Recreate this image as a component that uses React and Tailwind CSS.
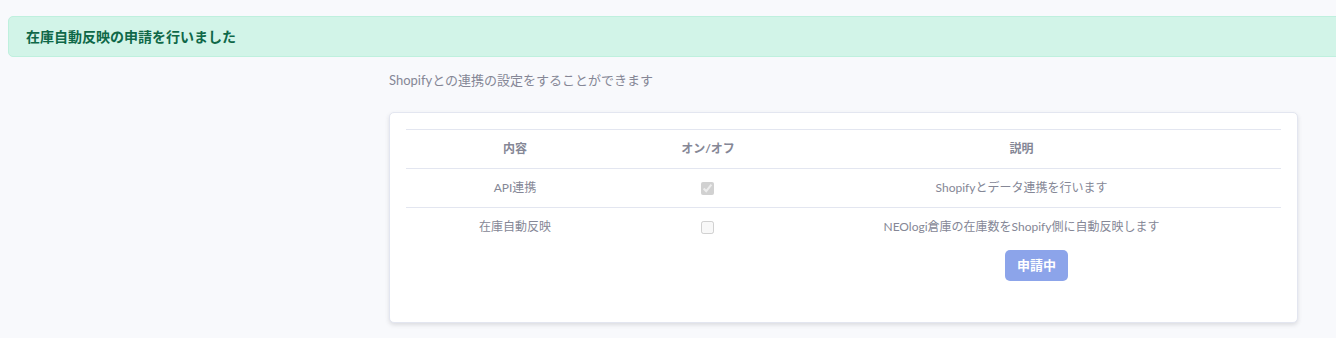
import React from "react";

const rows = [
  { name: "API連携", checked: true, note: "Shopifyとデータ連携を行います" },
  {
    name: "在庫自動反映",
    checked: false,
    note: "NEOlogi倉庫の在庫数をShopify側に自動反映します",
    pending: true,
  },
];

const App = () => {
  return (
    <div
      className="min-h-[338px] bg-[#f8f9fc] text-[#858796] overflow-hidden pt-4"
      style={{ fontFamily: 'Lato, "Noto Sans CJK JP", sans-serif' }}
    >
      {/* alert */}
      <div className="ml-2 -mr-4 h-[41px] flex items-center px-[17px] bg-[#d2f4e8] border border-[#bff0de] rounded-[5px] text-[#0f6848] text-[14px] font-bold">
        在庫自動反映の申請を行いました
      </div>

      <div className="flex">
        <div className="w-[389px] shrink-0" />
        <div className="flex-1 mr-[38px]">
          <p className="mt-[13px] text-[13px] leading-[20px]">
            Shopifyとの連携の設定をすることができます
          </p>

          <div className="mt-[22px] bg-white border border-[#e3e6f0] rounded-[5px] shadow-[0_2px_4px_rgba(58,59,69,0.15)] px-4 pt-4 pb-4">
            <div className="border-t border-[#e3e6f0] text-[12px]">
              {/* header */}
              <div className="grid grid-cols-[218px_168px_1fr] h-[38px] items-center font-bold">
                <div className="text-center">内容</div>
                <div className="text-center">オン/オフ</div>
                <div className="text-center pr-[30px]">説明</div>
              </div>

              {rows.map((r) => (
                <div
                  key={r.name}
                  className="grid grid-cols-[218px_168px_1fr] border-t border-[#e3e6f0] pt-[9px] pb-[9px]"
                >
                  <div className="text-center leading-[20px]">{r.name}</div>
                  <div className="flex justify-center h-[20px] items-center pr-[2px]">
                    <input
                      type="checkbox"
                      disabled
                      defaultChecked={r.checked}
                      className="w-[13px] h-[13px] m-0"
                    />
                  </div>
                  <div className="flex flex-col items-center">
                    <div className="leading-[20px] pr-[30px]">{r.note}</div>
                    {r.pending && (
                      <button
                        type="button"
                        disabled
                        className="mt-[13px] mb-[16px] h-[31px] px-3 rounded-[5px] bg-[#8ca4ea] text-white text-[13px] font-bold"
                      >
                        申請中
                      </button>
                    )}
                  </div>
                </div>
              ))}
            </div>
          </div>
        </div>
      </div>
    </div>
  );
};

export default App;
